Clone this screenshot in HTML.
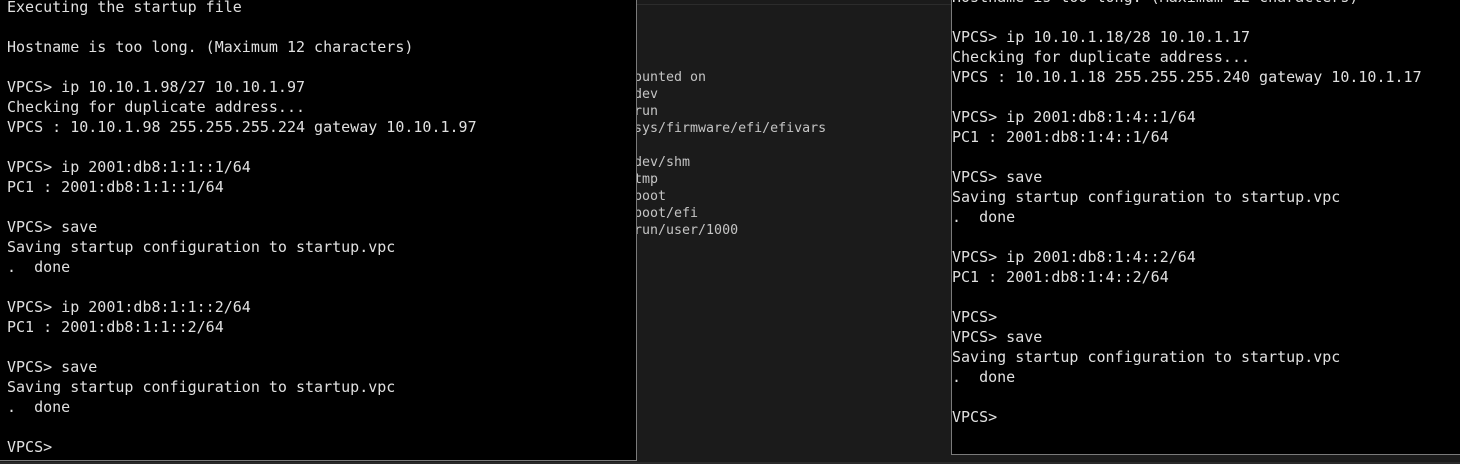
<!DOCTYPE html><html><head><style>
body{margin:0;width:1460px;height:464px;background:#1b1b1b;overflow:hidden;position:relative;font-family:"DejaVu Sans Mono","Liberation Mono",monospace}
.t{position:absolute;background:#000;color:#e0e0e0;font-size:15px;line-height:20px;white-space:pre;overflow:hidden}
#l{left:0;top:-3px;width:637px;height:464px;border-right:1px solid #7a7a7a;border-bottom:1px solid #7a7a7a;padding-left:7px;box-sizing:border-box}
#r{left:951px;top:-13px;width:509px;height:468px;border-left:1px solid #7a7a7a;border-bottom:1px solid #7a7a7a;padding-left:0px;box-sizing:border-box}
#m{position:absolute;left:626px;top:69px;color:#c4c4c4;font-size:13.3px;line-height:17px;white-space:pre}
#bar{position:absolute;left:637px;top:4px;width:314px;height:1px;background:#2c2c2c}
#bot{position:absolute;left:0;top:462px;width:1460px;height:2px;background:#2a2a2a}
</style></head><body>
<div id="bar"></div>
<div id="m">mounted on
/dev
/run
/sys/firmware/efi/efivars

/dev/shm
/tmp
/boot
/boot/efi
/run/user/1000</div>
<div id="bot"></div>
<div class="t" id="l">Executing the startup file

Hostname is too long. (Maximum 12 characters)

VPCS> ip 10.10.1.98/27 10.10.1.97
Checking for duplicate address...
VPCS : 10.10.1.98 255.255.255.224 gateway 10.10.1.97

VPCS> ip 2001:db8:1:1::1/64
PC1 : 2001:db8:1:1::1/64

VPCS> save
Saving startup configuration to startup.vpc
.  done

VPCS> ip 2001:db8:1:1::2/64
PC1 : 2001:db8:1:1::2/64

VPCS> save
Saving startup configuration to startup.vpc
.  done

VPCS></div>
<div class="t" id="r">Hostname is too long. (Maximum 12 characters)

VPCS> ip 10.10.1.18/28 10.10.1.17
Checking for duplicate address...
VPCS : 10.10.1.18 255.255.255.240 gateway 10.10.1.17

VPCS> ip 2001:db8:1:4::1/64
PC1 : 2001:db8:1:4::1/64

VPCS> save
Saving startup configuration to startup.vpc
.  done

VPCS> ip 2001:db8:1:4::2/64
PC1 : 2001:db8:1:4::2/64

VPCS>
VPCS> save
Saving startup configuration to startup.vpc
.  done

VPCS></div>
</body></html>
